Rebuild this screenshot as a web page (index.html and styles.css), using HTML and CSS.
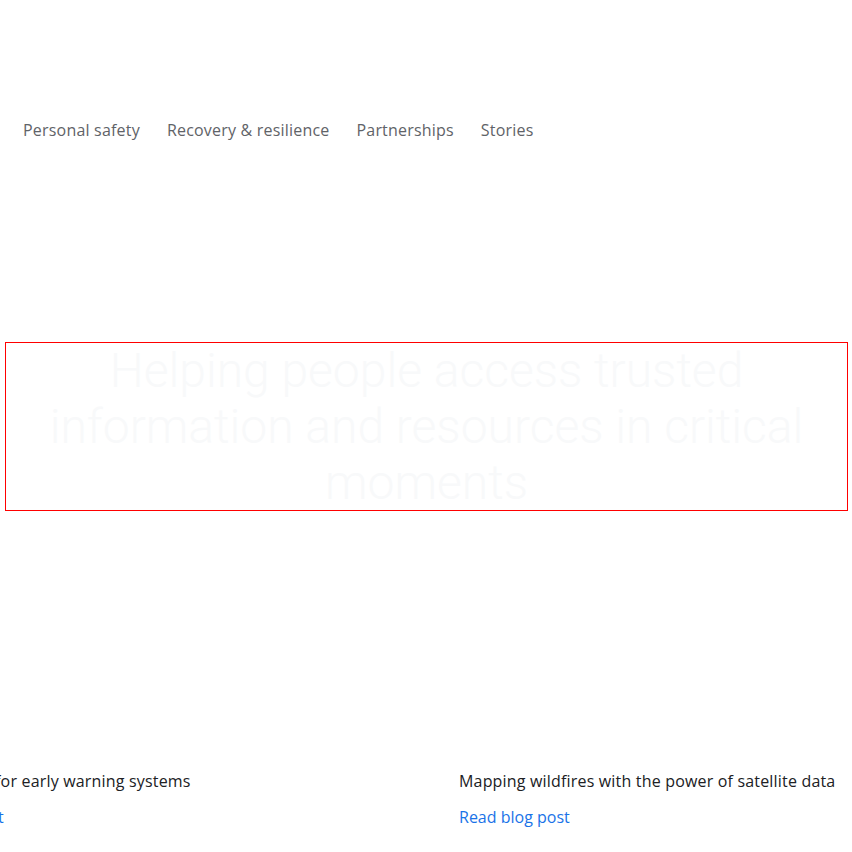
FILE: index.html
```html
<!DOCTYPE html>
<html lang="en">
<head>
<meta charset="utf-8">
<title>Crisis response</title>
<link rel="stylesheet" href="styles.css">
</head>
<body>
<header class="top">
  <nav class="nav">
    <a class="nav-link" href="#">Personal safety</a>
    <a class="nav-link" href="#">Recovery &amp; resilience</a>
    <a class="nav-link" href="#">Partnerships</a>
    <a class="nav-link" href="#">Stories</a>
  </nav>
</header>
<section class="hero">
  <h1 class="hero-title">Helping people access trusted information and resources in critical moments</h1>
</section>
<section class="stories">
  <div class="track">
    <article class="card">
      <h3 class="card-title">Advancing AI for early warning systems</h3>
      <a class="card-link" href="#">Read blog post</a>
    </article>
    <article class="card">
      <h3 class="card-title">Mapping wildfires with the power of satellite data</h3>
      <a class="card-link" href="#">Read blog post</a>
    </article>
  </div>
</section>
</body>
</html>
```
FILE: styles.css
```css
html, body {
  margin: 0;
  padding: 0;
  background: #ffffff;
  overflow: hidden;
}
body {
  font-family: "Open Sans", Roboto, Arial, sans-serif;
  color: #202124;
  width: 852px;
  height: 852px;
}
.top {
  padding: 118px 0 0 23px;
  height: 24px;
}
.nav {
  display: flex;
  gap: 27px;
}
.nav-link {
  font-size: 16px;
  line-height: 24px;
  font-weight: 500;
  letter-spacing: 0.2px;
  color: #5f6368;
  text-decoration: none;
}
.hero {
  padding: 200px 0 0 5px;
  width: 843px;
}
.hero-title {
  margin: 0;
  border: 1px solid #ff0000;
  height: 167px;
  box-sizing: content-box;
  font-family: Roboto, "Open Sans", Arial, sans-serif;
  font-size: 48px;
  line-height: 56px;
  font-weight: 300;
  color: #f8f9fa;
  text-align: center;
  padding: 0 40px;
}
.stories {
  padding-top: 258px;
  overflow: hidden;
}
.track {
  display: flex;
  gap: 24px;
  margin-left: -107px;
}
.card {
  flex: 0 0 542px;
}
.card-title {
  margin: 0 0 12px;
  font-size: 16px;
  line-height: 24px;
  font-weight: 400;
  letter-spacing: 0.18px;
  color: #202124;
}
.card-link {
  font-size: 16px;
  line-height: 24px;
  font-weight: 500;
  color: #1a73e8;
  text-decoration: none;
}
```
